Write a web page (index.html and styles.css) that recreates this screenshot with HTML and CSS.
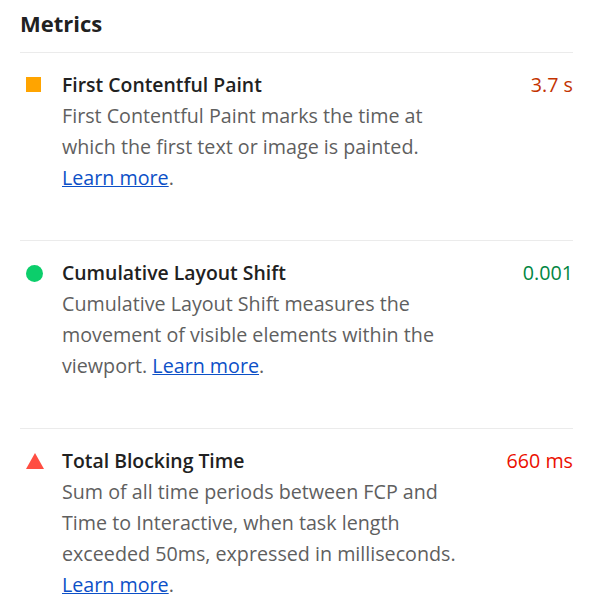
FILE: index.html
```html
<!DOCTYPE html>
<html>
<head>
<meta charset="utf-8">
<link rel="stylesheet" href="styles.css">
</head>
<body>
<div class="panel">
  <h2 class="heading">Metrics</h2>
  <div class="metric">
    <div class="icon"><span class="sq"></span></div>
    <div class="body">
      <div class="top"><span class="title">First Contentful Paint</span><span class="val avg">3.7 s</span></div>
      <div class="desc">First Contentful Paint marks the time at which the first text or image is painted. <a href="#">Learn more</a>.</div>
    </div>
  </div>
  <div class="metric">
    <div class="icon"><span class="dot"></span></div>
    <div class="body">
      <div class="top"><span class="title">Cumulative Layout Shift</span><span class="val pass">0.001</span></div>
      <div class="desc">Cumulative Layout Shift measures the movement of visible elements within the viewport. <a href="#">Learn more</a>.</div>
    </div>
  </div>
  <div class="metric">
    <div class="icon"><svg class="tri" width="18" height="16" viewBox="0 0 18 16"><polygon points="9,0 18,16 0,16" fill="#ff4e42"/></svg></div>
    <div class="body">
      <div class="top"><span class="title">Total Blocking Time</span><span class="val fail">660 ms</span></div>
      <div class="desc">Sum of all time periods between FCP and Time to Interactive, when task length exceeded 50ms, expressed in milliseconds. <a href="#">Learn more</a>.</div>
    </div>
  </div>
</div>
</body>
</html>
```
FILE: styles.css
```css
html, body { margin: 0; padding: 0; background: #fff; }
body { font-family: "Open Sans", "Noto Sans", sans-serif; color: #212121; }
.panel { padding: 0 22px 0 20px; }
.heading { margin: 0; font-size: 22px; font-weight: 700; line-height: 46px; height: 52px; box-sizing: border-box; color: #212121; }
.metric { display: flex; border-top: 1px solid #ebebeb; padding: 16px 0 47px; font-size: 19.7px; line-height: 31px; }
.icon { width: 42px; flex: none; display: flex; align-items: flex-start; padding-top: 8px; box-sizing: border-box; padding-left: 6px; }
.sq { display: block; width: 15px; height: 15px; background: #ffa400; }
.dot { display: block; width: 17px; height: 17px; border-radius: 50%; background: #0cce6b; }
.tri { display: block; }
.body { flex: 1; }
.top { display: flex; justify-content: space-between; }
.title { color: #212121; font-weight: 600; font-size: 19.4px; }
.val { font-size: 19.7px; font-weight: 500; }
.val.avg { color: #c33300; }
.val.pass { color: #018642; }
.val.fail { color: #eb0f00; }
.desc { color: #5f5f5f; max-width: 402px; }
.desc a { color: #0c50c7; text-decoration: underline; }
```
